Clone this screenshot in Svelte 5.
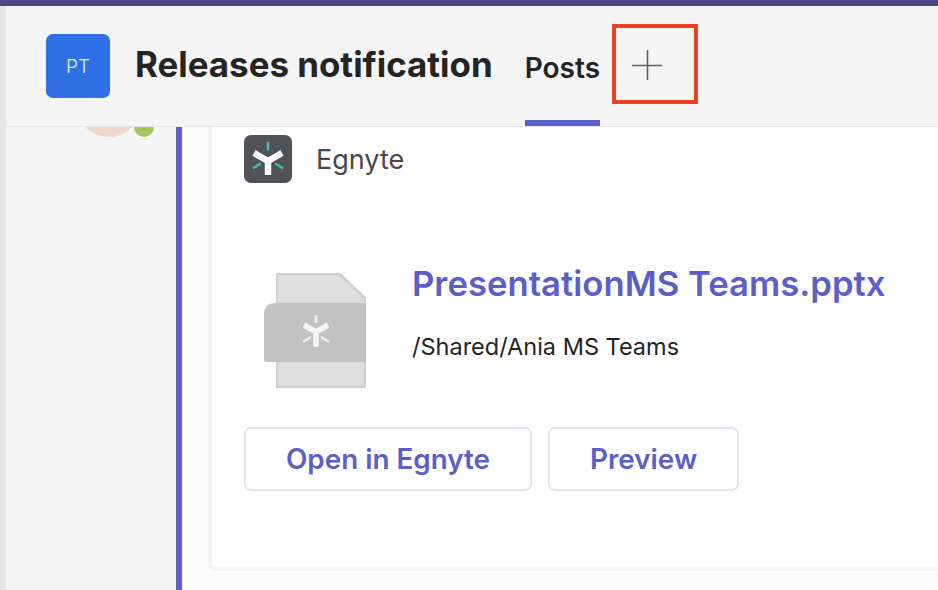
<script>
  const actions = ["Open in Egnyte", "Preview"];
</script>

<div class="page">
  <div class="topbar"></div>
  <div class="main">
    <div class="rail"></div>
    <div class="content">
      <header class="header">
        <div class="team-tile">PT</div>
        <h1 class="team-name">Releases notification</h1>
        <div class="tab">Posts</div>
        <div class="add-box">
          <svg width="32" height="32" viewBox="0 0 32 32" aria-hidden="true">
            <path d="M1 16.5H31M16.5 1V31" stroke="#616161" stroke-width="1.6" fill="none" />
          </svg>
        </div>
      </header>

      <div class="feed">
        <div class="author-col">
          <div class="avatar"></div>
          <div class="presence"></div>
        </div>
        <div class="thread">
          <div class="card">
            <div class="app-row">
              <div class="app-icon">
                <svg width="48" height="48" viewBox="0 0 48 48" aria-hidden="true">
                  <path d="M24 7V15.500M9 33.300L16.700 28.500M39 33.300L31.300 28.500" stroke="#4fb5ad" stroke-width="2.600" fill="none" />
                  <path d="M10 18L24 26L38 18M24 26V40" stroke="#fff" stroke-width="6.500" fill="none" stroke-linejoin="miter" />
                </svg>
              </div>
              <span class="app-name">Egnyte</span>
            </div>

            <div class="file-row">
              <svg class="file-icon" width="102" height="116" viewBox="0 0 102 116" aria-hidden="true">
                <path d="M13 1H76L101 25V114H13Z" fill="#dedede" stroke="#cfcfcf" stroke-width="2" />
                <path d="M12 30H102V89H2Q0 89 0 87V42Q0 30 12 30Z" fill="#c2c2c2" />
                <path d="M52 42V50M39 69L47 64M65 69L57 64" stroke="#eee" stroke-width="2.500" fill="none" />
                <path d="M40 52L52 59L64 52M52 59V74" stroke="#f4f4f4" stroke-width="5.500" fill="none" />
              </svg>
              <div class="file-text">
                <div class="file-name">PresentationMS Teams.pptx</div>
                <div class="file-path">/Shared/Ania MS Teams</div>
              </div>
            </div>

            <div class="actions">
              {#each actions as label}
                <button class="action">{label}</button>
              {/each}
            </div>
          </div>
        </div>
      </div>
    </div>
  </div>
</div>

<style>
  :global(body) {
    margin: 0;
    overflow: hidden;
  }

  .page {
    width: 938px;
    height: 590px;
    display: flex;
    flex-direction: column;
    overflow: hidden;
    font-family: Inter, "Liberation Sans", sans-serif;
    background: #f5f5f5;
  }

  .topbar {
    height: 6px;
    flex: none;
    background: #464a8c;
  }

  .main {
    flex: 1;
    display: flex;
    min-height: 0;
  }

  .rail {
    width: 6px;
    flex: none;
    background: #e6e6e6;
  }

  .content {
    flex: 1;
    display: flex;
    flex-direction: column;
    min-width: 0;
  }

  .header {
    height: 121px;
    flex: none;
    display: flex;
    align-items: flex-start;
    box-sizing: border-box;
    padding-left: 40px;
    background: #f5f5f5;
    border-bottom: 1px solid #e8e8e8;
    position: relative;
    z-index: 1;
  }

  .team-tile {
    width: 64px;
    height: 64px;
    margin-top: 28px;
    flex: none;
    display: flex;
    align-items: center;
    justify-content: center;
    border-radius: 7px;
    background: #2f70e6;
    color: #e0f3ff;
    font-size: 19px;
    font-weight: 300;
  }

  .team-name {
    margin: 35px 0 0 25px;
    font-size: 34.900px;
    line-height: 46px;
    font-weight: 700;
    color: #242424;
    white-space: nowrap;
  }

  .tab {
    margin-left: 32px;
    height: 120px;
    box-sizing: border-box;
    width: 75px;
    padding-top: 44px;
    border-bottom: 6px solid #5b5fc7;
    font-size: 28px;
    line-height: 36px;
    font-weight: 600;
    color: #242424;
    white-space: nowrap;
  }

  .add-box {
    width: 86px;
    height: 80px;
    margin: 18px 0 0 12px;
    box-sizing: border-box;
    border: 4px solid #ee3e24;
    padding: 21px 0 0 15px;
  }

  .add-box svg {
    display: block;
  }

  .feed {
    flex: 1;
    display: flex;
    min-height: 0;
  }

  .author-col {
    width: 170px;
    flex: none;
    position: relative;
    overflow: hidden;
    background: #f5f5f5;
  }

  .avatar {
    position: absolute;
    left: 72px;
    top: -48px;
    width: 62px;
    height: 58px;
    border-radius: 50%;
    background: #efd6ce;
  }

  .presence {
    position: absolute;
    left: 128px;
    top: -10px;
    width: 20px;
    height: 20px;
    border-radius: 50%;
    background: #a3c85f;
  }

  .thread {
    flex: 1;
    min-width: 0;
    border-left: 6px solid #5b5fc7;
    background: #fbfbfb;
    padding-left: 26px;
  }

  .card {
    height: 444px;
    width: 760px;
    box-sizing: border-box;
    padding: 8px 0 0 32px;
    background: #fff;
    border-left: 4px solid #f3f3f3;
    border-bottom: 4px solid #f3f3f3;
    border-bottom-left-radius: 7px;
  }

  .app-row {
    display: flex;
    align-items: center;
    gap: 24px;
  }

  .app-icon {
    width: 48px;
    height: 48px;
    border-radius: 7px;
    overflow: hidden;
    background: #4f5358;
  }

  .app-icon svg {
    display: block;
  }

  .app-name {
    font-size: 27px;
    color: #484848;
  }

  .file-row {
    display: flex;
    align-items: flex-start;
    margin: 90px 0 0 20px;
  }

  .file-icon {
    flex: none;
    display: block;
  }

  .file-text {
    margin: -13px 0 0 46px;
  }

  .file-name {
    font-size: 34.700px;
    line-height: 46px;
    font-weight: 600;
    color: #5b5fc7;
    white-space: nowrap;
  }

  .file-path {
    margin-top: 24px;
    font-size: 23.500px;
    line-height: 34px;
    color: #242424;
    white-space: nowrap;
  }

  .actions {
    display: flex;
    gap: 16px;
    margin-top: 38px;
  }

  .action {
    height: 64px;
    padding: 0 40px;
    box-sizing: border-box;
    background: #fff;
    border: 2px solid #e4e3f5;
    border-radius: 7px;
    font-family: inherit;
    font-size: 27.800px;
    font-weight: 600;
    color: #5b5fc7;
    white-space: nowrap;
  }
</style>
